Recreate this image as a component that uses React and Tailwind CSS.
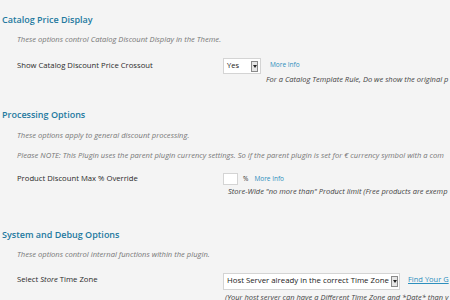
const Arrow = () => (
  <span className="flex h-[11px] w-[7px] items-center justify-center border border-[#8a8a8a] bg-[#e6e6e6]">
    <svg width="4" height="3" viewBox="0 0 4 3">
      <path d="M0 0h4L2 3z" fill="#222" />
    </svg>
  </span>
);

const Heading = ({ children, className = "" }) => (
  <h3 className={`h-[14px] pl-[2px] text-[9px] leading-[14px] font-semibold text-[#23799f] ${className}`}>
    {children}
  </h3>
);

const Desc = ({ children, className = "" }) => (
  <p className={`h-[14px] pl-[17px] text-[7.6px] leading-[14px] italic text-[#777] whitespace-nowrap ${className}`}>
    {children}
  </p>
);

const Label = ({ children }) => (
  <div className="w-[223px] shrink-0 pl-[17px] text-[7.7px] font-medium text-[#2a2a2a]">{children}</div>
);

const MoreInfo = ({ className = "" }) => (
  <a className={`text-[6.5px] text-[#2d8fbd] ${className}`}>More Info</a>
);

export default function App() {
  return (
    <div
      className="h-[300px] w-[450px] overflow-hidden bg-[#f4f4f4] whitespace-nowrap"
      style={{ fontFamily: '"Open Sans", "Liberation Sans", sans-serif' }}
    >
      <Heading className="mt-[13px]">Catalog Price Display</Heading>
      <Desc className="mt-[5px]">These options control Catalog Discount Display in the Theme.</Desc>
      <div className="mt-[12px] flex h-[16px] items-center">
        <Label>Show Catalog Discount Price Crossout</Label>
        <div className="flex h-[16px] w-[38px] items-center justify-between border border-[#d4d4d4] bg-white pl-[3px] pr-[2px] text-[7.5px] text-[#222]">
          <span>Yes</span>
          <Arrow />
        </div>
        <MoreInfo className="ml-[9px] -mt-[2px]" />
      </div>
      <p className="ml-[266px] h-[10px] text-[7.5px] leading-[10px] italic text-[#444]">
        For a Catalog Template Rule, Do we show the original p
      </p>

      <Heading className="mt-[24px]">Processing Options</Heading>
      <Desc className="mt-[6px]">These options apply to general discount processing.</Desc>
      <Desc className="mt-[6px]">
        Please NOTE: This Plugin uses the parent plugin currency settings. So if the parent plugin is set for € currency symbol with a com
      </Desc>
      <div className="mt-[10px] flex h-[14px] items-center">
        <Label>Product Discount Max % Override</Label>
        <div className="h-[12px] w-[15px] border border-[#d4d4d4] bg-white" />
        <span className="ml-[5px] text-[6.5px] text-[#333]">%</span>
        <MoreInfo className="ml-[6px]" />
      </div>
      <p className="ml-[228px] h-[10px] text-[7.5px] leading-[10px] italic text-[#444]">
        Store-Wide "no more than" Product limit (Free products are exemp
      </p>

      <Heading className="mt-[32px]">System and Debug Options</Heading>
      <Desc className="mt-[5px]">These options control internal functions within the plugin.</Desc>
      <div className="mt-[11px] flex h-[18px] items-center">
        <Label>
          <span className="-mt-[3px] block">
            Select <span className="italic">Store</span> Time Zone
          </span>
        </Label>
        <div className="flex h-[17px] w-[177px] items-center justify-between border border-[#d4d4d4] bg-white pl-[3px] pr-[1px] text-[7.8px] text-[#222]">
          <span>Host Server already in the correct Time Zone</span>
          <Arrow />
        </div>
        <a className="ml-[8px] -mt-[3px] text-[7.5px] text-[#2d8fbd] underline">Find Your G</a>
      </div>
      <p className="ml-[225px] mt-[2px] h-[10px] text-[7.5px] leading-[10px] italic text-[#444]">
        (Your host server can have a Different Time Zone and *Date* than y
      </p>
    </div>
  );
}
